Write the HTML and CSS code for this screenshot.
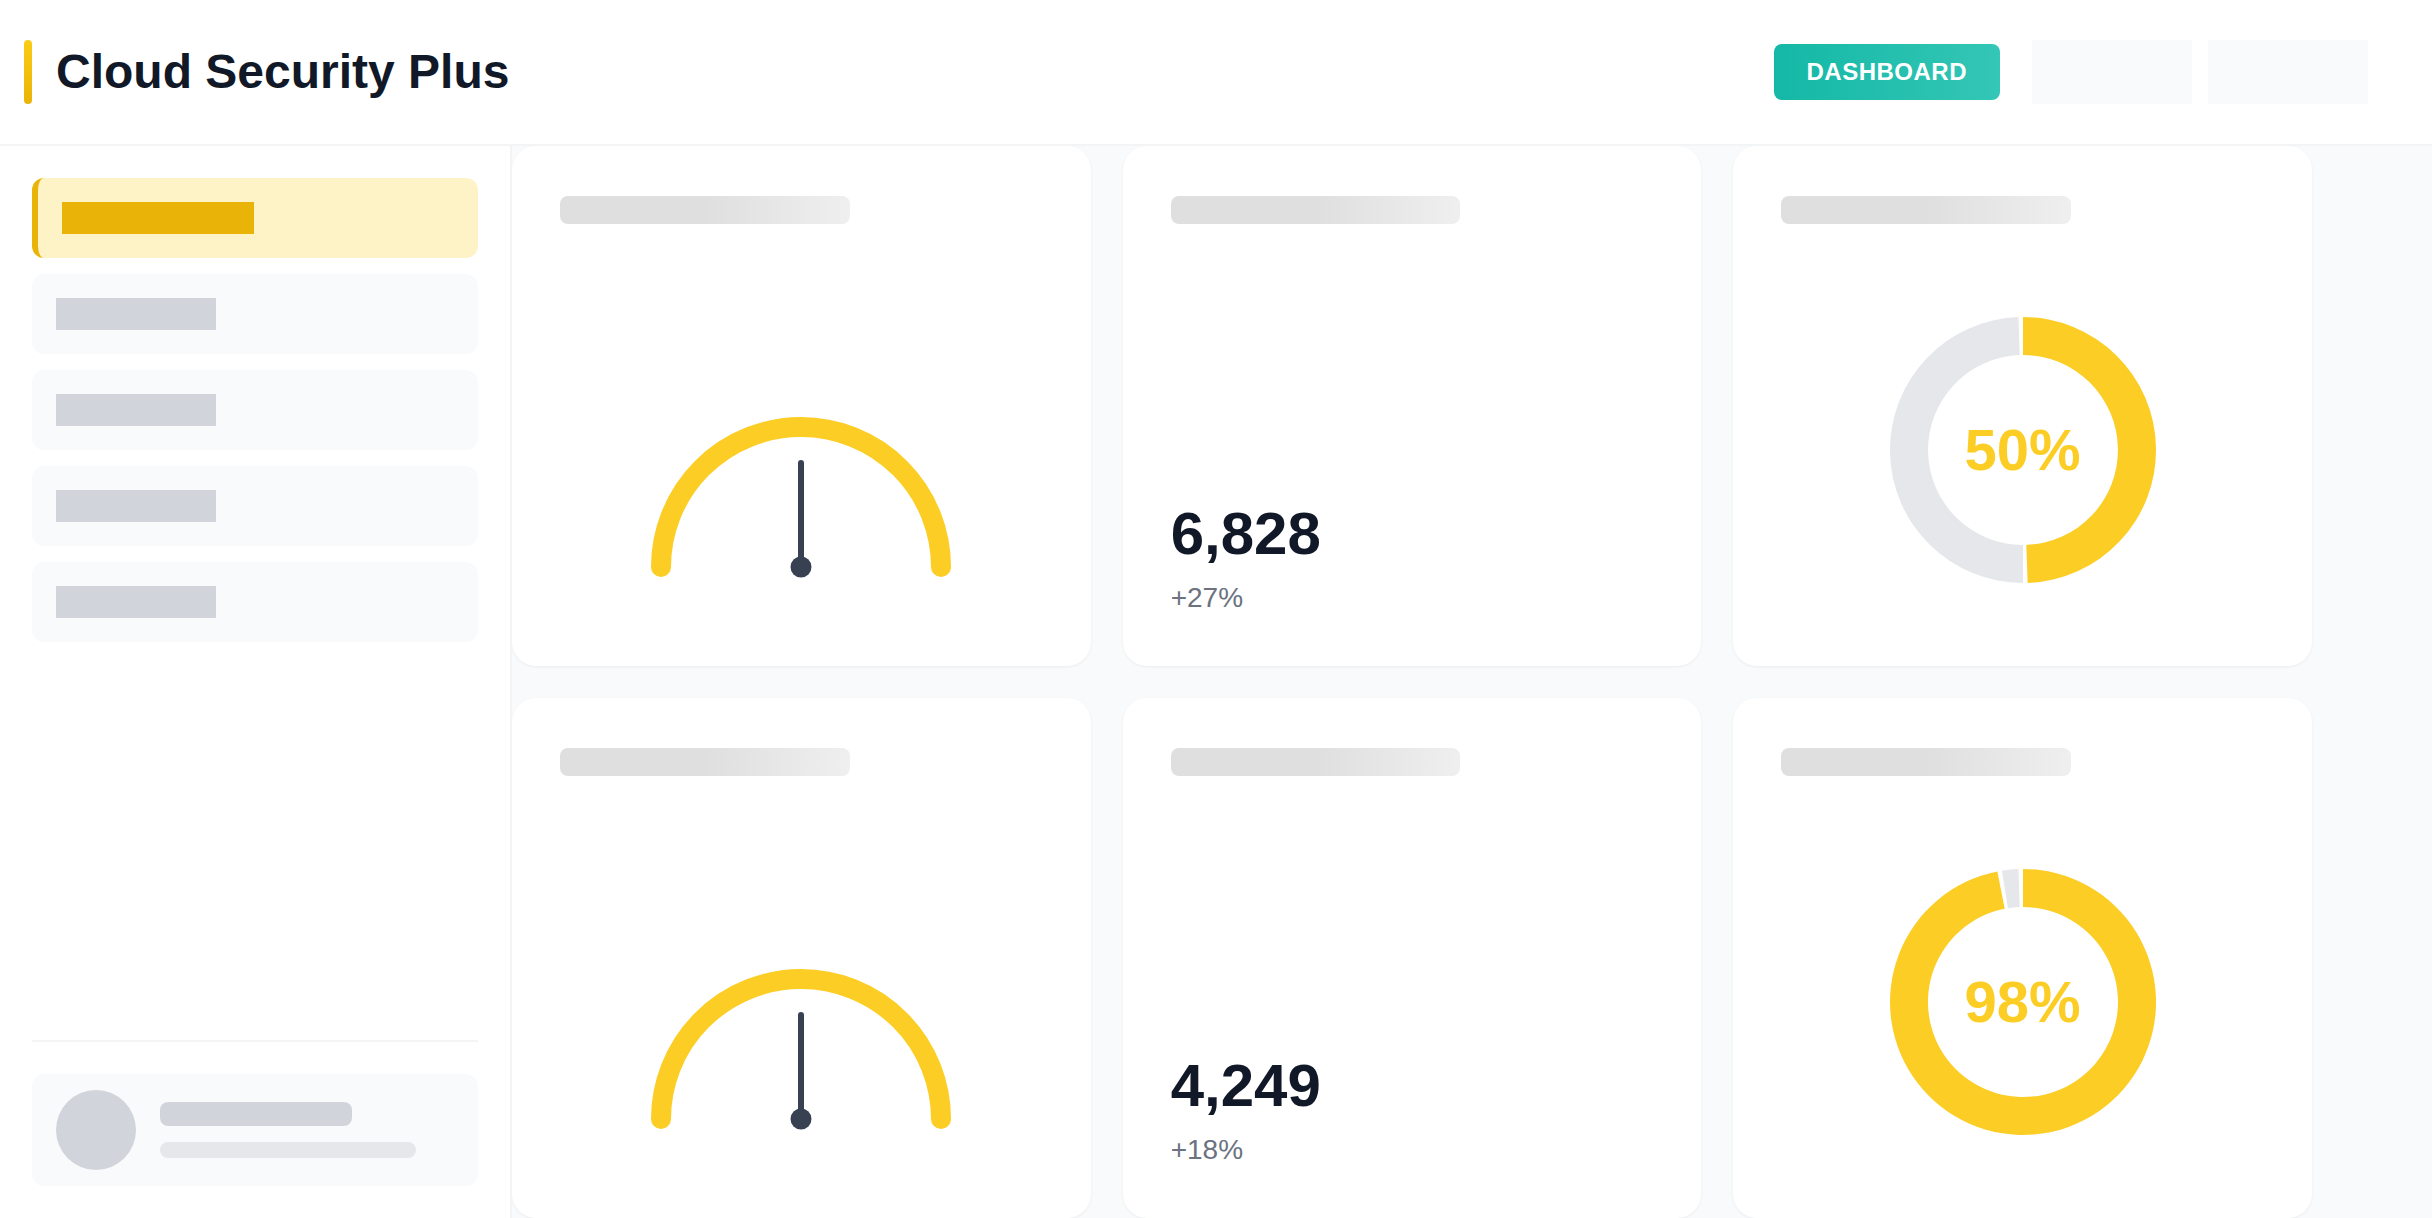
FILE: index.html
```html
<!DOCTYPE html>
<html lang="en">
<head>
<meta charset="utf-8">
<title>Cloud Security Plus</title>
<link rel="stylesheet" href="styles.css">
</head>
<body>
<header class="topbar">
  <div class="brand">
    <span class="brand-accent"></span>
    <h1 class="brand-title">Cloud Security Plus</h1>
  </div>
  <nav class="top-nav">
    <button class="btn-primary">DASHBOARD</button>
    <span class="top-slot"></span>
    <span class="top-slot"></span>
  </nav>
</header>
<div class="layout">
  <aside class="sidebar">
    <ul class="side-nav">
      <li class="side-item active"><span class="side-bar"></span></li>
      <li class="side-item"><span class="side-bar"></span></li>
      <li class="side-item"><span class="side-bar"></span></li>
      <li class="side-item"><span class="side-bar"></span></li>
      <li class="side-item"><span class="side-bar"></span></li>
    </ul>
    <div class="side-footer">
      <div class="user-card">
        <span class="avatar"></span>
        <div class="user-lines">
          <span class="user-line-1"></span>
          <span class="user-line-2"></span>
        </div>
      </div>
    </div>
  </aside>
  <main class="main">
    <div class="grid">
      <section class="card">
        <div class="card-title"></div>
        <div class="chart gauge-area">
          <svg class="gauge" width="320" height="170" viewBox="0 0 320 170">
            <path d="M 20 155 A 140 140 0 0 1 300 155" fill="none" stroke="#fccd24" stroke-width="20" stroke-linecap="round"/>
            <line x1="160" y1="155" x2="160" y2="51" stroke="#374151" stroke-width="6" stroke-linecap="round"/>
            <circle cx="160" cy="155" r="10.5" fill="#374151"/>
          </svg>
        </div>
      </section>
      <section class="card">
        <div class="card-title"></div>
        <div class="stat">
          <div class="stat-value">6,828</div>
          <div class="stat-change">+27%</div>
        </div>
      </section>
      <section class="card">
        <div class="card-title"></div>
        <div class="chart donut-area">
          <div class="donut">
            <svg width="270" height="270" viewBox="-135 -135 270 270">
              <path d="M 0 -133 A 133 133 0 0 1 4.64 132.92 L 3.32 94.94 A 95 95 0 0 0 0 -95 Z" fill="#fccd24"/>
              <path d="M 0 133 A 133 133 0 0 1 -4.64 -132.92 L -3.32 -94.94 A 95 95 0 0 0 0 95 Z" fill="#e5e7eb"/>
            </svg>
            <span class="donut-label">50%</span>
          </div>
        </div>
      </section>
      <section class="card">
        <div class="card-title"></div>
        <div class="chart gauge-area">
          <svg class="gauge" width="320" height="170" viewBox="0 0 320 170">
            <path d="M 20 155 A 140 140 0 0 1 300 155" fill="none" stroke="#fccd24" stroke-width="20" stroke-linecap="round"/>
            <line x1="160" y1="155" x2="160" y2="51" stroke="#374151" stroke-width="6" stroke-linecap="round"/>
            <circle cx="160" cy="155" r="10.5" fill="#374151"/>
          </svg>
        </div>
      </section>
      <section class="card">
        <div class="card-title"></div>
        <div class="stat">
          <div class="stat-value">4,249</div>
          <div class="stat-change">+18%</div>
        </div>
      </section>
      <section class="card">
        <div class="card-title"></div>
        <div class="chart donut-area">
          <div class="donut">
            <svg width="270" height="270" viewBox="-135 -135 270 270">
              <path d="M 0 -133 A 133 133 0 1 1 -25.65 -130.50 L -18.32 -93.22 A 95 95 0 1 0 0 -95 Z" fill="#fccd24"/>
              <path d="M -21.08 -131.32 A 133 133 0 0 1 -4.64 -132.92 L -3.32 -94.94 A 95 95 0 0 0 -15.06 -93.80 Z" fill="#e5e7eb"/>
            </svg>
            <span class="donut-label">98%</span>
          </div>
        </div>
      </section>
    </div>
  </main>
</div>
</body>
</html>
```
FILE: styles.css
```css
* { box-sizing: border-box; }
html, body {
  margin: 0;
  padding: 0;
  height: 100%;
  overflow: hidden;
}
body {
  font-family: "Liberation Sans", Arial, sans-serif;
  background: #ffffff;
  color: #111827;
}

/* Header */
.topbar {
  height: 146px;
  display: flex;
  align-items: center;
  justify-content: space-between;
  padding: 0 64px 0 24px;
  background: #ffffff;
  border-bottom: 2px solid #f3f4f6;
}
.brand {
  display: flex;
  align-items: center;
  gap: 24px;
}
.brand-accent {
  width: 8px;
  height: 64px;
  border-radius: 4px;
  background: linear-gradient(180deg, #facc15 0%, #eab308 100%);
}
.brand-title {
  margin: 0;
  font-size: 48px;
  font-weight: 700;
  color: #111827;
  line-height: 1;
}
.top-nav {
  display: flex;
  align-items: center;
  gap: 16px;
}
.btn-primary {
  height: 56px;
  padding: 0 33px;
  margin-right: 16px;
  border: none;
  border-radius: 8px;
  background: linear-gradient(90deg, #14b8a6 0%, #34c6b6 100%);
  color: #ffffff;
  font-family: "Liberation Sans", Arial, sans-serif;
  font-size: 24px;
  font-weight: 700;
  letter-spacing: 0.5px;
}
.top-slot {
  display: block;
  width: 160px;
  height: 64px;
  background: #f9fafb;
}

/* Layout */
.layout {
  display: flex;
  height: 1072px;
}
.sidebar {
  width: 512px;
  flex: 0 0 512px;
  border-right: 2px solid #f3f4f6;
  background: #ffffff;
  padding: 32px 32px 32px 32px;
  display: flex;
  flex-direction: column;
}
.side-nav {
  list-style: none;
  margin: 0;
  padding: 0;
  display: flex;
  flex-direction: column;
  gap: 16px;
}
.side-item {
  height: 80px;
  border-radius: 12px;
  background: #f9fafb;
  padding: 0 24px;
  display: flex;
  align-items: center;
}
.side-bar {
  display: block;
  width: 160px;
  height: 32px;
  background: #d1d5db;
}
.side-item.active {
  background: #fef3c7;
  border-left: 6px solid #eab308;
}
.side-item.active .side-bar {
  width: 192px;
  background: #eab308;
}
.side-footer {
  margin-top: auto;
  border-top: 2px solid #f3f4f6;
  padding-top: 32px;
}
.user-card {
  height: 112px;
  border-radius: 12px;
  background: #f9fafb;
  padding: 16px 24px;
  display: flex;
  align-items: center;
  gap: 24px;
}
.avatar {
  width: 80px;
  height: 80px;
  border-radius: 50%;
  background: #d1d5db;
  flex: 0 0 80px;
}
.user-lines {
  display: flex;
  flex-direction: column;
  gap: 16px;
}
.user-line-1 {
  display: block;
  width: 192px;
  height: 24px;
  border-radius: 8px;
  background: #d1d5db;
}
.user-line-2 {
  display: block;
  width: 256px;
  height: 16px;
  border-radius: 8px;
  background: #e5e7eb;
}

/* Main */
.main {
  flex: 1;
  background: #f9fafb;
  overflow: hidden;
}
.grid {
  width: 1800px;
  display: grid;
  grid-template-columns: repeat(3, 1fr);
  grid-template-rows: 520px 520px;
  gap: 32px;
}
.card {
  background: #ffffff;
  border-radius: 24px;
  box-shadow: 0 1px 3px rgba(0, 0, 0, 0.06);
  padding: 48px;
  display: flex;
  flex-direction: column;
}
.card-title {
  width: 60%;
  height: 28px;
  margin-top: 2px;
  border-radius: 8px;
  background: linear-gradient(90deg, #dfdfdf 0%, #dfdfdf 50%, #efefef 100%);
  flex: 0 0 auto;
}
.chart {
  flex: 1;
  display: flex;
  justify-content: center;
  align-items: flex-end;
}
.gauge-area { padding-bottom: 36px; }
.gauge { display: block; }
.donut-area { padding-bottom: 33px; }
.donut {
  display: grid;
  place-items: center;
}
.donut > svg,
.donut > .donut-label {
  grid-area: 1 / 1;
}
.donut > svg { display: block; }
.donut-label {
  font-size: 58px;
  font-weight: 700;
  color: #fccd24;
  line-height: 1;
}
.stat {
  flex: 1;
  display: flex;
  flex-direction: column;
  justify-content: flex-end;
  padding-bottom: 4px;
}
.stat-value {
  font-size: 60px;
  font-weight: 700;
  line-height: 60px;
  color: #111827;
}
.stat-change {
  margin-top: 18px;
  font-size: 28px;
  line-height: 32px;
  color: #6b7280;
}
```
